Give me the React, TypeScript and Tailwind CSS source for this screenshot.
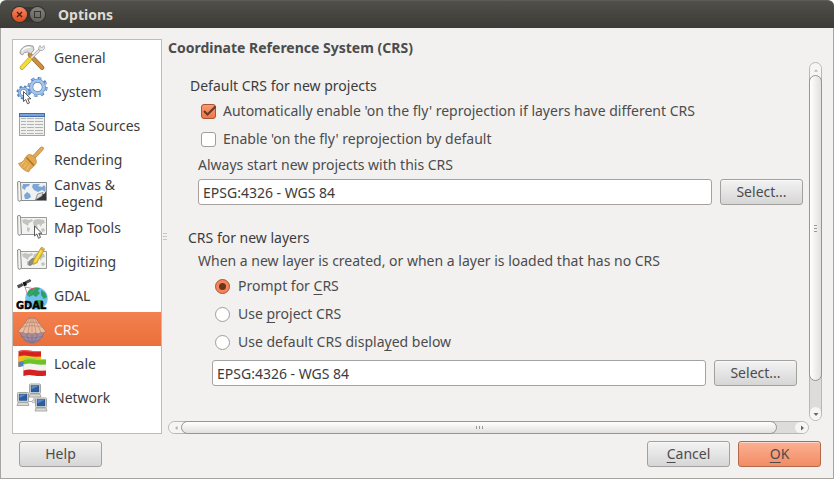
import { useState } from "react";
import type { ReactNode } from "react";

/* ---------- sidebar icons ---------- */

const svgClass = "block h-8 w-8 shrink-0";

function Cursor({ x, y }: { x: number; y: number }) {
  return (
    <path
      transform={`translate(${x} ${y})`}
      d="M0 0V10L2.3 8L4 12.3L6 11.4L4.3 7.3H7.4Z"
      fill="#fff"
      stroke="#333"
      strokeWidth="0.8"
    />
  );
}

function GeneralIcon() {
  return (
    <svg viewBox="0 0 32 32" className={svgClass} aria-hidden="true">
      <path d="M14 14L26 26.500" stroke="#8a5a1c" strokeWidth="4.600" strokeLinecap="round" />
      <path d="M14 14L26 26.500" stroke="#cf8f38" strokeWidth="3.400" strokeLinecap="round" />
      <path d="M14 18L24.500 8" stroke="#9a9a9a" strokeWidth="2.600" />
      <path d="M14 18L24.500 8" stroke="#ececec" strokeWidth="1.600" />
      <path d="M24 4.500L25.500 7L28 4.500L28.500 7.500L26.500 9.500L23.500 9.500L22.500 7Z" fill="#e8e8e8" stroke="#999" strokeWidth="0.700" />
      <path d="M6 26.500L13.500 18.500" stroke="#b59a18" strokeWidth="4.600" strokeLinecap="round" />
      <path d="M6 26.500L13.500 18.500" stroke="#f3db3f" strokeWidth="3.400" strokeLinecap="round" />
      <path d="M4 12.500C4 8 8 4.500 13 4.500L17 5L18 9L14.500 13L12 11L8.500 11.500L6.500 14Z" fill="#dcdcdc" stroke="#888" strokeWidth="0.800" />
      <path d="M6 10.500C7.500 7.500 10.500 6 14.500 6.500" stroke="#fff" strokeWidth="1.200" fill="none" />
    </svg>
  );
}

function SystemIcon() {
  return (
    <svg viewBox="0 0 32 32" className={svgClass} aria-hidden="true">
      <circle cx="21.500" cy="12" r="8.600" fill="none" stroke="#5580ba" strokeWidth="3" strokeDasharray="3.400 3.350" />
      <circle cx="21.500" cy="12" r="8.400" fill="none" stroke="#9dc0ea" strokeWidth="2" strokeDasharray="2.600 4.150" strokeDashoffset="-0.400" />
      <circle cx="21.500" cy="12" r="6.300" fill="none" stroke="#5580ba" strokeWidth="4" />
      <circle cx="21.500" cy="12" r="6.300" fill="none" stroke="#a3c4eb" strokeWidth="2.800" />
      <circle cx="7.500" cy="17.500" r="6" fill="none" stroke="#5580ba" strokeWidth="2" strokeDasharray="2.400 2.300" />
      <circle cx="7.500" cy="17.500" r="4.200" fill="none" stroke="#5580ba" strokeWidth="3" />
      <circle cx="7.500" cy="17.500" r="4.200" fill="none" stroke="#9bbde6" strokeWidth="2" />
      <Cursor x={7.5} y={16.5} />
    </svg>
  );
}

function DataSourcesIcon() {
  return (
    <svg viewBox="0 0 32 32" className={svgClass} aria-hidden="true">
      <rect x="3.500" y="4.500" width="25" height="22" fill="#f0f0ee" stroke="#a3a5a1" />
      <rect x="3" y="4" width="26" height="4" fill="#3f6fb0" />
      <rect x="4" y="5" width="24" height="2" fill="#7ba3d6" />
      {[10, 13, 16, 19, 22, 25].map((y) => (
        <path key={y} d={`M5 ${y - 0.5}H10M11 ${y - 0.5}H18M19 ${y - 0.5}H27`} stroke="#b2b4b0" strokeWidth="1" />
      ))}
    </svg>
  );
}

function RenderingIcon() {
  return (
    <svg viewBox="0 0 32 32" className={svgClass} aria-hidden="true">
      <path d="M17.500 14.500L25.800 5.500" stroke="#b57d30" strokeWidth="4" strokeLinecap="round" />
      <path d="M17.500 14.500L25.800 5.500" stroke="#e2ac5c" strokeWidth="2.600" strokeLinecap="round" />
      <path d="M11.500 12C13 11 16 11.500 18 13.500C20 15.500 21 18.500 20 20.500L17 24Q14 26 12.500 29Q6 27 2.500 20.500Q8 19 9 15Z" fill="#e0a850" stroke="#c08a3c" strokeWidth="0.700" />
      <path d="M10.500 14.500L18 22.500" stroke="#b06c1c" strokeWidth="1.200" />
      <path d="M9 18L5 22M11 20L7.500 24.500M13.500 22L10.500 27" stroke="#f1cb85" strokeWidth="0.800" />
    </svg>
  );
}

function ScrollEdge() {
  return (
    <>
      <path d="M1.500 5Q3 3.500 4.500 5L5.500 22.500Q4 26 2 23.500Z" fill="#e4e4e1" stroke="#8a8a88" strokeWidth="0.900" />
      <path d="M3.300 6V23" stroke="#fff" strokeWidth="0.800" />
    </>
  );
}

function MapSheet() {
  return (
    <>
      <path d="M4.500 6.500H30.500V23.500H4.500Z" fill="#f3f3f1" stroke="#9a9a98" />
      <path d="M6 9L9 8L13 9L16 8L17 10L13 12L12 15L9 13L7 12ZM11 16L14 17L13 21L11 20ZM18 9L22 8L28 9L29 12L26 13L25 16L23 13L21 14L22 18L19 19L18 15L17 12ZM25 18L28 17L29 20L26 21Z" fill="#c2c5bf" />
      <ScrollEdge />
    </>
  );
}

function CanvasIcon() {
  return (
    <svg viewBox="0 0 32 32" className={svgClass} aria-hidden="true">
      <path d="M4.500 5.500H30.500V23.500H4.500Z" fill="#f0f1f0" stroke="#8a8e8f" />
      <path d="M7 7H14L13 9L10 10L9 13L6 11ZM17 7H24L22 9L26 10L28 8L29.500 10V15L26 13L22 15L18 13L16 10ZM8 18L11 15L14 17L15 20L12 22H9Z" fill="#7aa7d8" />
      <path d="M19.500 23L22 18L28 17L30 14.500V23Z" fill="#34383a" />
      <path d="M19.500 23L21.500 17L27 15.500L26 19Z" fill="#dcdede" stroke="#666" strokeWidth="0.600" />
      <ScrollEdge />
    </svg>
  );
}

function MapToolsIcon() {
  return (
    <svg viewBox="0 0 32 32" className={svgClass} aria-hidden="true">
      <MapSheet />
      <Cursor x={18.5} y={15} />
    </svg>
  );
}

function DigitizingIcon() {
  return (
    <svg viewBox="0 0 32 32" className={svgClass} aria-hidden="true">
      <MapSheet />
      <path d="M13 20V16.500L16 13.500L20 14L17.500 18L14.500 20.500Z" fill="#8b8e8a" stroke="#666" strokeWidth="0.700" />
      <path d="M24.500 3.500L28 5.500L20.500 18L17 19.500L17.200 16Z" fill="#f2cf2f" stroke="#b8951a" strokeWidth="0.800" />
      <path d="M25 6L19 16.500" stroke="#fbe98a" strokeWidth="0.900" />
      <path d="M24.500 3.500L25.500 2L28.500 3.700L28 5.500Z" fill="#e8b08e" stroke="#a98507" strokeWidth="0.500" />
    </svg>
  );
}

function GdalIcon() {
  return (
    <svg viewBox="0 0 32 32" className={svgClass} aria-hidden="true">
      <circle cx="20.500" cy="19.500" r="11.200" fill="#72c0ee" />
      <path d="M13 11Q18 7.500 24 9L22 12L24 14L20 18L17 16L13 18L11 15ZM25 11L29 13.500L31 18L28 20L25 16ZM20 21L25 21L28 24L27 27L25 30L20 27Z" fill="#2f9f63" />
      <path d="M9 8L19 10M9 8L12 17M12 17L19 10" stroke="#e0606e" strokeWidth="0.800" fill="none" />
      <path d="M1.500 6.500L6 4.500L7 6.500L2.500 9ZM9.500 2.500L14 0.500L15 2L10.500 4.500Z" fill="#555" stroke="#222" strokeWidth="0.600" />
      <path d="M6.500 3.500L9.500 2.500L11 6L8 7.500Z" fill="#111" />
      <text
        x="0"
        y="30"
        fontSize="11"
        fontWeight="700"
        fontFamily="'Liberation Sans Narrow', 'DejaVu Sans Condensed', sans-serif"
        textAnchor="start"
        fill="#000"
        stroke="#000"
        strokeWidth="0.400"
      >
        GDAL
      </text>
    </svg>
  );
}

function CrsIcon() {
  return (
    <svg viewBox="0 0 32 32" className={svgClass} aria-hidden="true">
      <path d="M4 17H28C28 23 23 30 16 30C9 30 4 23 4 17Z" fill="#a48d9f" stroke="#7d6d8a" strokeWidth="0.800" />
      <path d="M5 23Q16 27 27 23M8 26.500Q16 30 24 26.500M10 18Q11 26 15 30M22 18Q21 26 17 30M16 18V30" stroke="#75678a" strokeWidth="0.600" fill="none" />
      <path d="M12 5.500Q16 4.500 20 5.500L23 10L30 18.500L27 20L25 19.500L22 21L19 20L16 21.500L13 20L10 21L7 19.500L5 20L2 18.500L9 10Z" fill="#e9bca2" stroke="#a06b55" strokeWidth="0.700" />
      <path d="M13.300 5.500L7 19.500M14.600 5.500L12 20M16 5.500V21M17.400 5.500L20 20M18.700 5.500L25 19.500M9 10Q16 8 23 10M6 14Q16 11 26 14" stroke="#b37d66" strokeWidth="0.600" fill="none" />
    </svg>
  );
}

function LocaleIcon() {
  return (
    <svg viewBox="0 0 32 32" className={svgClass} aria-hidden="true">
      <path d="M2.500 4Q8 2.500 13 3.500T25 4V19Q18 20 13 19T2.500 20Z" fill="#d42222" />
      <path d="M2.500 9.500Q8 8 13 9T25 9.500V19Q18 20 13 19T2.500 20Z" fill="#f4bf1d" />
      <path d="M2.500 15Q8 13.500 13 14.500V19Q8 18.500 2.500 20Z" fill="#4a84c8" />
      <path d="M2.500 4.500Q8 3 13 4T25 4.500" stroke="#ee6a60" strokeWidth="0.900" fill="none" />
      <path d="M7.500 12Q13 10.500 18 11.500T30 12V28.500Q24 29.500 18 28.500T7.500 29Z" fill="#6cc327" />
      <path d="M7.500 17.500Q13 16 18 17T30 17.500V28.500Q24 29.500 18 28.500T7.500 29Z" fill="#f3f3f2" />
      <path d="M7.500 23.500Q13 22 18 23T30 23.500V28.500Q24 29.500 18 28.500T7.500 29Z" fill="#d42222" />
      <path d="M7.500 12.500Q13 11 18 12T30 12.500" stroke="#a1e267" strokeWidth="0.900" fill="none" />
    </svg>
  );
}

function Monitor({ x, y }: { x: number; y: number }) {
  return (
    <g transform={`translate(${x} ${y})`}>
      <rect x="0.500" y="0.500" width="11" height="9.500" rx="0.800" fill="#ebebe8" stroke="#9a9c95" strokeWidth="0.900" />
      <rect x="2" y="2" width="8" height="6.500" fill="#2d5c9f" stroke="#274f88" strokeWidth="0.500" />
      <path d="M2.500 2.500H9.500L2.500 6Z" fill="#5d88c2" />
      <path d="M1 10.500H11L12 13.500H0Z" fill="#d9d9d5" stroke="#9a9c95" strokeWidth="0.800" />
    </g>
  );
}

function NetworkIcon() {
  return (
    <svg viewBox="0 0 32 32" className={svgClass} aria-hidden="true">
      <path d="M12 20.500H20M18 14V20.500" stroke="#b4b6b1" strokeWidth="1.200" fill="none" />
      <circle cx="17.500" cy="20.500" r="1.500" fill="#e6e6e3" stroke="#999" strokeWidth="0.600" />
      <Monitor x={13} y={2.5} />
      <Monitor x={1} y={11} />
      <Monitor x={19} y={16.5} />
    </svg>
  );
}

const sections: { name: string; icon: ReactNode }[] = [
  { name: "General", icon: <GeneralIcon /> },
  { name: "System", icon: <SystemIcon /> },
  { name: "Data Sources", icon: <DataSourcesIcon /> },
  { name: "Rendering", icon: <RenderingIcon /> },
  { name: "Canvas & Legend", icon: <CanvasIcon /> },
  { name: "Map Tools", icon: <MapToolsIcon /> },
  { name: "Digitizing", icon: <DigitizingIcon /> },
  { name: "GDAL", icon: <GdalIcon /> },
  { name: "CRS", icon: <CrsIcon /> },
  { name: "Locale", icon: <LocaleIcon /> },
  { name: "Network", icon: <NetworkIcon /> },
];

/* ---------- controls ---------- */

function Key({ children }: { children: string }) {
  return (
    <span className="underline decoration-1 underline-offset-3 [text-decoration-skip-ink:none]">{children}</span>
  );
}

function PushButton({ children, primary = false }: { children: ReactNode; primary?: boolean }) {
  const tone = primary
    ? "border-[#b5694b] bg-linear-to-b from-[#fbb093] to-[#f28c63]"
    : "border-[#a3a19e] bg-linear-to-b from-[#f3f3f3] to-[#d6d6d6]";
  return (
    <button
      type="button"
      className={`h-[26px] w-[83px] shrink-0 rounded-[3px] border text-center leading-5 text-[#4c4c4c] inset-shadow-[0_1px_0_rgba(255,255,255,0.5)] ${tone}`}
    >
      {children}
    </button>
  );
}

function CheckRow({ label, defaultChecked = false }: { label: string; defaultChecked?: boolean }) {
  return (
    <label className="flex h-7 items-center gap-[7px]">
      <span className="relative flex h-[15px] w-[15px] shrink-0">
        <input
          type="checkbox"
          defaultChecked={defaultChecked}
          className="peer h-[15px] w-[15px] appearance-none rounded-[3px] border border-[#a09d9a] bg-white checked:border-[#a85536] checked:bg-[#f4834f] checked:bg-linear-to-b checked:from-[#fb9a70] checked:to-[#f07746]"
        />
        <svg
          viewBox="0 0 15 15"
          className="pointer-events-none absolute inset-0 hidden h-[15px] w-[15px] overflow-visible peer-checked:block"
          aria-hidden="true"
        >
          <path d="M3 7L6.500 10.500L14.500 2.500" fill="none" stroke="#6b3a28" strokeWidth="2.200" />
        </svg>
      </span>
      <span>{label}</span>
    </label>
  );
}

function RadioRow({ value, current, onPick, children }: { value: string; current: string; onPick: (v: string) => void; children: ReactNode }) {
  return (
    <label className="flex h-7 items-center gap-2">
      <span className="relative flex h-[15px] w-[15px] shrink-0">
        <input
          type="radio"
          name="layer-crs"
          value={value}
          checked={current === value}
          onChange={() => onPick(value)}
          className="peer h-[15px] w-[15px] appearance-none rounded-full border border-[#a09d9a] bg-white checked:border-[#a85536] checked:bg-[#f4865a]"
        />
        <span className="pointer-events-none absolute inset-0 m-auto hidden h-[7px] w-[7px] rounded-full bg-[#6b3421] peer-checked:block" />
      </span>
      <span>{children}</span>
    </label>
  );
}

function CrsPicker({ label }: { label: string }) {
  return (
    <div className="flex gap-2">
      <input
        type="text"
        aria-label={label}
        defaultValue="EPSG:4326 - WGS 84"
        className="h-[26px] min-w-0 flex-1 rounded-[3px] border border-[#a5a29f] bg-white px-1 text-[#3c3c3c]"
      />
      <PushButton>Select...</PushButton>
    </div>
  );
}

function Arrow({ d }: { d: string }) {
  return (
    <svg viewBox="0 0 6 6" className="h-[6px] w-[6px]" aria-hidden="true">
      <path d={d} fill="currentColor" />
    </svg>
  );
}

function VerticalScrollbar() {
  return (
    <div role="scrollbar" aria-controls="crs-page" aria-orientation="vertical" aria-valuenow={0} className="flex w-[13px] shrink-0 flex-col rounded-full border border-[#b9b7b5] bg-[#dedcda]">
      <button type="button" aria-label="Scroll up" className="-mb-2 flex h-5 shrink-0 justify-center rounded-t-full bg-[#f6f5f4] pt-1 text-[#aaa]">
        <Arrow d="M1 4.500L3 2.500L5 4.500Z" />
      </button>
      <div className="-mx-px flex flex-[306] flex-col items-center justify-center gap-[2px] rounded-full border border-[#979592] bg-linear-to-r from-white to-[#e2e0de]">
        <span className="h-px w-[3px] bg-[#999]" />
        <span className="h-px w-[3px] bg-[#999]" />
        <span className="h-px w-[3px] bg-[#999]" />
      </div>
      <div className="flex-[26]" />
      <button type="button" aria-label="Scroll down" className="flex h-[13px] shrink-0 items-center justify-center rounded-full bg-[#f6f5f4] text-[#666]">
        <Arrow d="M0.500 2L3 5L5.500 2Z" />
      </button>
    </div>
  );
}

function HorizontalScrollbar() {
  return (
    <div role="scrollbar" aria-controls="crs-page" aria-orientation="horizontal" aria-valuenow={0} className="mr-[13px] flex h-[13px] shrink-0 rounded-full border border-[#b9b7b5] bg-[#dedcda]">
      <button type="button" aria-label="Scroll left" className="-mr-2 flex w-5 shrink-0 items-center rounded-l-full bg-[#f6f5f4] pl-1 text-[#aaa]">
        <Arrow d="M4.500 1L2 3L4.500 5Z" />
      </button>
      <div className="-my-px flex flex-[596] items-center justify-center gap-[2px] rounded-full border border-[#979592] bg-linear-to-b from-white to-[#e2e0de]">
        <span className="h-[3px] w-px bg-[#999]" />
        <span className="h-[3px] w-px bg-[#999]" />
        <span className="h-[3px] w-px bg-[#999]" />
      </div>
      <div className="flex-[18]" />
      <button type="button" aria-label="Scroll right" className="flex w-[13px] shrink-0 items-center justify-center rounded-full bg-[#f6f5f4] text-[#666]">
        <Arrow d="M2 0.500L5 3L2 5.500Z" />
      </button>
    </div>
  );
}

/* ---------- dialog ---------- */

export default function App() {
  const [active, setActive] = useState("CRS");
  const [layerCrs, setLayerCrs] = useState("prompt");

  return (
    <div className="flex min-h-screen flex-col bg-white font-['Noto_Sans','Open_Sans',sans-serif] text-[14px] leading-5 text-[#4c4c4c]">
      <header className="flex h-7 shrink-0 items-center rounded-t-[6px] border-t border-[#5f5d57] bg-linear-to-b from-[#504f49] to-[#3c3b37] pl-3">
        <div className="flex gap-[3px] rounded-full bg-[#373632]">
          <button type="button" aria-label="Close" className="flex h-[15px] w-[15px] items-center justify-center rounded-full bg-linear-to-b from-[#f68661] to-[#dd4a1c] ring-1 ring-[#31302c]">
            <svg viewBox="0 0 7 7" className="h-[7px] w-[7px]" aria-hidden="true">
              <path d="M1 1L6 6M6 1L1 6" stroke="#4a1c0d" strokeWidth="1.300" />
            </svg>
          </button>
          <button type="button" aria-label="Maximize" className="flex h-[15px] w-[15px] items-center justify-center rounded-full bg-linear-to-b from-[#85837b] to-[#64625b] ring-1 ring-[#31302c]">
            <span className="h-[7px] w-[7px] border border-[#35342f]" />
          </button>
        </div>
        <h1 className="pl-[13px] font-bold text-[#dfdbd2]">Options</h1>
      </header>

      <main className="flex flex-1 flex-col border-x border-b border-[#a8a5a0] bg-[#f2f1f0] px-[11px] pt-[11px] pb-[11px]">
        <div className="flex flex-1">
          <nav aria-label="Option sections" className="w-[150px] shrink-0 border border-[#bfbcb8] bg-white">
            {sections.map(({ name, icon }) => (
              <button
                key={name}
                type="button"
                aria-current={active === name ? "page" : undefined}
                onClick={() => setActive(name)}
                className={`flex h-[34px] w-full items-center gap-[6px] pr-4 pl-[3px] text-left leading-[17px] ${
                  active === name ? "bg-linear-to-b from-[#f3814f] to-[#ea6f3c] text-white" : "text-[#3c3c3c]"
                }`}
              >
                {icon}
                <span>{name}</span>
              </button>
            ))}
          </nav>

          <div className="flex w-[6px] shrink-0 flex-col items-center justify-center gap-[2px]" aria-hidden="true">
            <span className="h-px w-1 bg-[#c9c7c4]" />
            <span className="h-px w-1 bg-[#c9c7c4]" />
            <span className="h-px w-1 bg-[#c9c7c4]" />
          </div>

          <section className="flex min-w-0 flex-1 flex-col">
            <h2 className="h-[23px] leading-[18px] font-bold">Coordinate Reference System (CRS)</h2>
            <div className="flex flex-1">
              <div id="crs-page" className="flex min-w-0 flex-1 flex-col pr-[6px] pl-5">
                <fieldset className="pt-[14px]">
                  <legend className="float-left w-full pl-[2px] text-[#3c3c3c]">Default CRS for new projects</legend>
                  <div className="clear-both pt-px pl-[10px]">
                    <div className="pl-[3px]">
                      <CheckRow label="Automatically enable 'on the fly' reprojection if layers have different CRS" defaultChecked />
                      <CheckRow label="Enable 'on the fly' reprojection by default" />
                    </div>
                    <p className="pt-[2px] pb-1">Always start new projects with this CRS</p>
                    <CrsPicker label="CRS for new projects" />
                  </div>
                </fieldset>

                <fieldset className="pt-[23px]">
                  <legend className="float-left w-full text-[#3c3c3c]">CRS for new layers</legend>
                  <div className="clear-both pt-[3px] pr-[6px] pl-[10px]">
                    <p>When a new layer is created, or when a layer is loaded that has no CRS</p>
                    <div className="pt-px pl-[17px]">
                      <RadioRow value="prompt" current={layerCrs} onPick={setLayerCrs}>
                        Prompt for <Key>C</Key>RS
                      </RadioRow>
                      <RadioRow value="project" current={layerCrs} onPick={setLayerCrs}>
                        Use <Key>p</Key>roject CRS
                      </RadioRow>
                      <RadioRow value="default" current={layerCrs} onPick={setLayerCrs}>
                        Use default CRS displa<Key>y</Key>ed below
                      </RadioRow>
                    </div>
                    <div className="pt-1 pl-[14px]">
                      <CrsPicker label="CRS for new layers" />
                    </div>
                  </div>
                </fieldset>
              </div>
              <VerticalScrollbar />
            </div>
            <HorizontalScrollbar />
          </section>
        </div>

        <footer className="flex gap-2 pt-[7px] pr-px pl-[7px]">
          <PushButton>Help</PushButton>
          <span className="flex-1" />
          <PushButton>
            <Key>C</Key>ancel
          </PushButton>
          <PushButton primary>
            <Key>O</Key>K
          </PushButton>
        </footer>
      </main>
    </div>
  );
}
